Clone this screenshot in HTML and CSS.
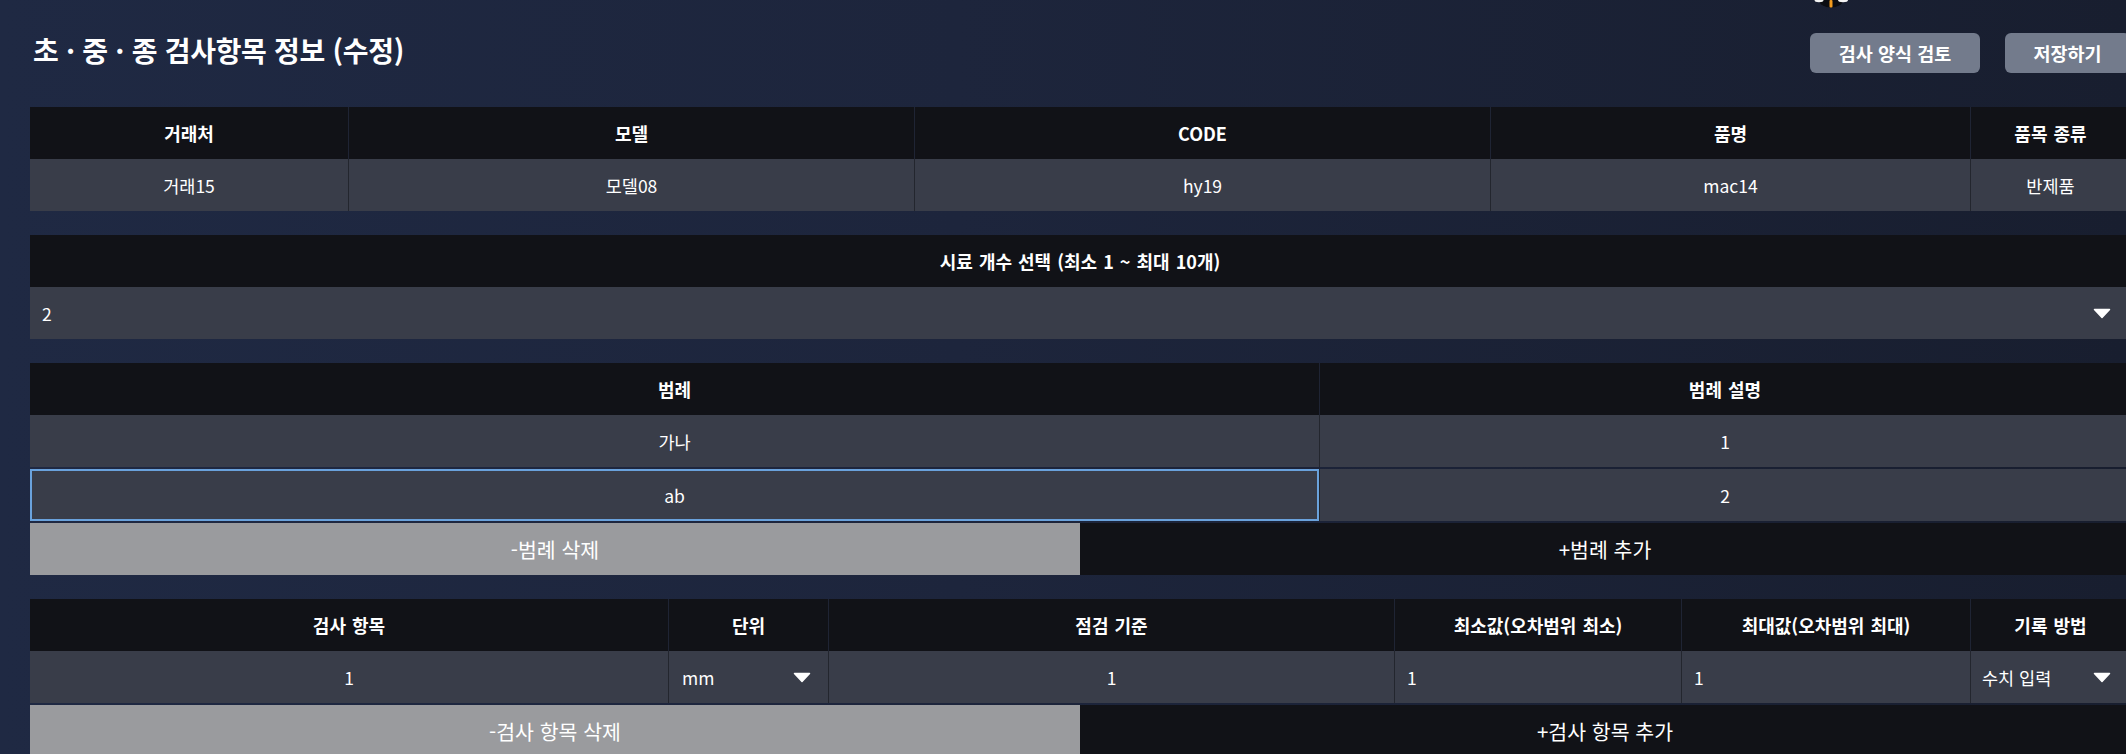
FILE: index.html
```html
<!DOCTYPE html>
<html lang="ko">
<head>
<meta charset="utf-8">
<title>초 · 중 · 종 검사항목 정보 (수정)</title>
<link rel="stylesheet" href="styles.css">
</head>
<body>
<div class="page">
  <svg class="peek" width="34" height="10" viewBox="0 0 34 10" aria-hidden="true">
    <ellipse cx="17" cy="0" rx="12" ry="7.5" fill="#0b0d12"/>
    <ellipse cx="5" cy="0" rx="4.5" ry="2.2" fill="#f4f4f4"/>
    <ellipse cx="29" cy="0" rx="5" ry="2.2" fill="#f4f4f4"/>
    <rect x="15.5" y="0" width="3" height="7.5" rx="1" fill="#f39c1f"/>
  </svg>

  <header class="topbar">
    <h1 class="title">초 · 중 · 종 검사항목 정보 (수정)</h1>
    <div class="actions">
      <button class="btn btn-review">검사 양식 검토</button>
      <button class="btn btn-save">저장하기</button>
    </div>
  </header>

  <section class="tbl">
    <div class="row head cols-info">
      <div class="cell">거래처</div>
      <div class="cell">모델</div>
      <div class="cell">CODE</div>
      <div class="cell">품명</div>
      <div class="cell">품목 종류</div>
    </div>
    <div class="row data cols-info">
      <div class="cell">거래15</div>
      <div class="cell">모델08</div>
      <div class="cell">hy19</div>
      <div class="cell">mac14</div>
      <div class="cell">반제품</div>
    </div>
  </section>

  <section class="tbl">
    <div class="row head cols-one">
      <div class="cell">시료 개수 선택 (최소 1 ~ 최대 10개)</div>
    </div>
    <div class="row data cols-one">
      <div class="cell select sel-wide">
        <span>2</span>
        <svg class="caret" width="18" height="11" viewBox="0 0 18 11"><path d="M1.5 1.5 H16.5 L9 9.5 Z" fill="#fff" stroke="#fff" stroke-width="1.5" stroke-linejoin="round"/></svg>
      </div>
    </div>
  </section>

  <section class="tbl">
    <div class="row head cols-legend">
      <div class="cell">범례</div>
      <div class="cell">범례 설명</div>
    </div>
    <div class="row data cols-legend">
      <div class="cell">가나</div>
      <div class="cell">1</div>
    </div>
    <div class="row data cols-legend next">
      <div class="cell focused">ab</div>
      <div class="cell">2</div>
    </div>
    <div class="ops">
      <div class="op op-del">-범례 삭제</div>
      <div class="op op-add">+범례 추가</div>
    </div>
  </section>

  <section class="tbl">
    <div class="row head cols-items">
      <div class="cell">검사 항목</div>
      <div class="cell">단위</div>
      <div class="cell">점검 기준</div>
      <div class="cell">최소값(오차범위 최소)</div>
      <div class="cell">최대값(오차범위 최대)</div>
      <div class="cell">기록 방법</div>
    </div>
    <div class="row data cols-items">
      <div class="cell">1</div>
      <div class="cell select sel-unit">
        <span>mm</span>
        <svg class="caret" width="18" height="11" viewBox="0 0 18 11"><path d="M1.5 1.5 H16.5 L9 9.5 Z" fill="#fff" stroke="#fff" stroke-width="1.5" stroke-linejoin="round"/></svg>
      </div>
      <div class="cell">1</div>
      <div class="cell left">1</div>
      <div class="cell left">1</div>
      <div class="cell select sel-method">
        <span>수치 입력</span>
        <svg class="caret" width="18" height="11" viewBox="0 0 18 11"><path d="M1.5 1.5 H16.5 L9 9.5 Z" fill="#fff" stroke="#fff" stroke-width="1.5" stroke-linejoin="round"/></svg>
      </div>
    </div>
    <div class="ops">
      <div class="op op-del">-검사 항목 삭제</div>
      <div class="op op-add">+검사 항목 추가</div>
    </div>
  </section>
</div>
</body>
</html>
```

FILE: styles.css
```css
html, body {
  margin: 0;
  padding: 0;
  overflow: hidden;
}

body {
  width: 2126px;
  height: 754px;
  background: linear-gradient(90deg, #1f2943 0%, #1d253c 45%, #181e2f 100%);
  font-family: "Noto Sans CJK KR", "Noto Sans", sans-serif;
  color: #ffffff;
}

.page {
  position: relative;
  width: 2100px;
  padding: 33px 0 0 30px;
}

.peek {
  position: absolute;
  left: 1814px;
  top: 0;
}

.topbar {
  display: flex;
  justify-content: space-between;
  align-items: flex-start;
  height: 40px;
  margin-bottom: 34px;
}

.title {
  margin: 0;
  padding-left: 3px;
  font-size: 28px;
  font-weight: 700;
  line-height: 34px;
  letter-spacing: -0.3px;
}

.actions {
  display: flex;
  gap: 25px;
}

.btn {
  display: flex;
  align-items: center;
  justify-content: center;
  height: 40px;
  padding: 0;
  border: none;
  border-radius: 6px;
  background: #737b8c;
  color: #ffffff;
  font-family: "Noto Sans CJK KR", sans-serif;
  font-size: 18.5px;
  font-weight: 700;
}

.btn-review { width: 170px; }
.btn-save { width: 125px; }

.tbl {
  display: flex;
  flex-direction: column;
  margin-bottom: 24px;
}

.row {
  display: grid;
  height: 52px;
}

.cols-info { grid-template-columns: 318px 566px 576px 480px 160px; }
.cols-one { grid-template-columns: 1fr; }
.cols-legend { grid-template-columns: 1289px 811px; }
.cols-items { grid-template-columns: 638px 160px 566px 287px 289px 160px; }

.cell {
  display: flex;
  align-items: center;
  justify-content: center;
  min-width: 0;
  box-sizing: border-box;
  font-size: 17.5px;
  white-space: nowrap;
}

.head {
  background: #111217;
}

.head .cell {
  font-size: 18px;
  font-weight: 700;
  word-spacing: 1px;
}

.head .cell + .cell {
  border-left: 1px solid #1f2434;
}

.data {
  background: #393d49;
}

.data .cell + .cell {
  border-left: 1px solid #23262e;
}

.next {
  margin-top: 2px;
}

.cell.left {
  justify-content: flex-start;
  padding-left: 12px;
}

.select {
  justify-content: space-between;
}

.sel-wide { padding: 0 19px 0 12px; }
.sel-unit { padding: 0 17px 0 13px; }
.sel-method { padding: 0 19px 0 11px; }

.caret {
  display: block;
}

.focused {
  border: 2px solid #6aa2dc;
}

.ops {
  display: grid;
  grid-template-columns: 1fr 1fr;
  height: 52px;
  margin-top: 2px;
}

.op {
  display: flex;
  align-items: center;
  justify-content: center;
  font-size: 20.5px;
}

.op-del {
  background: #9a9b9e;
}

.op-add {
  background: #111217;
}
```
